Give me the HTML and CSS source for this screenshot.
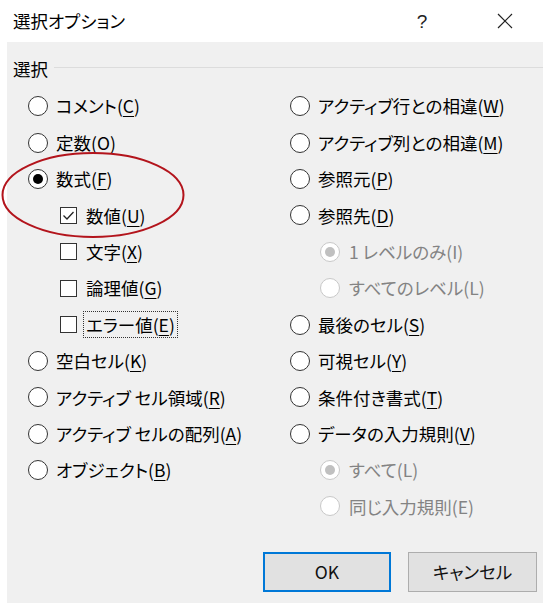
FILE: index.html
```html
<!DOCTYPE html>
<html lang="ja">
<head>
<meta charset="utf-8">
<link rel="stylesheet" href="styles.css">
</head>
<body>
<div class="dialog">
  <div class="titlebar">
    <div class="title">選択オプション</div>
    <div class="help">?</div>
    <div class="close">
      <svg width="16" height="16" viewBox="0 0 16 16"><path d="M1 1 L15 15 M15 1 L1 15" stroke="#222" stroke-width="1.2" fill="none"/></svg>
    </div>
  </div>
  <div class="body">
    <div class="group-head">
      <span class="group-label">選択</span>
      <span class="group-line"></span>
    </div>
    <div class="columns">
      <div class="col col-left">
        <div class="row"><span class="radio"></span><span class="lbl">コメント(<u>C</u>)</span></div>
        <div class="row"><span class="radio"></span><span class="lbl">定数(<u>O</u>)</span></div>
        <div class="row"><span class="radio checked"></span><span class="lbl">数式(<u>F</u>)</span></div>
        <div class="row sub"><span class="check"><svg width="17" height="17" viewBox="0 0 17 17"><path d="M3.5 8.5 L7 12 L13.5 5" stroke="#222" stroke-width="1.3" fill="none"/></svg></span><span class="lbl">数値(<u>U</u>)</span></div>
        <div class="row sub"><span class="check"></span><span class="lbl">文字(<u>X</u>)</span></div>
        <div class="row sub"><span class="check"></span><span class="lbl">論理値(<u>G</u>)</span></div>
        <div class="row sub"><span class="check"></span><span class="lbl focus">エラー値(<u>E</u>)</span></div>
        <div class="row"><span class="radio"></span><span class="lbl">空白セル(<u>K</u>)</span></div>
        <div class="row"><span class="radio"></span><span class="lbl">アクティブ セル領域(<u>R</u>)</span></div>
        <div class="row"><span class="radio"></span><span class="lbl">アクティブ セルの配列(<u>A</u>)</span></div>
        <div class="row"><span class="radio"></span><span class="lbl">オブジェクト(<u>B</u>)</span></div>
      </div>
      <div class="col col-right">
        <div class="row"><span class="radio"></span><span class="lbl">アクティブ行との相違(<u>W</u>)</span></div>
        <div class="row"><span class="radio"></span><span class="lbl">アクティブ列との相違(<u>M</u>)</span></div>
        <div class="row"><span class="radio"></span><span class="lbl">参照元(<u>P</u>)</span></div>
        <div class="row"><span class="radio"></span><span class="lbl">参照先(<u>D</u>)</span></div>
        <div class="row sub disabled"><span class="radio checked"></span><span class="lbl">1 レベルのみ(I)</span></div>
        <div class="row sub disabled"><span class="radio"></span><span class="lbl">すべてのレベル(L)</span></div>
        <div class="row"><span class="radio"></span><span class="lbl">最後のセル(<u>S</u>)</span></div>
        <div class="row"><span class="radio"></span><span class="lbl">可視セル(<u>Y</u>)</span></div>
        <div class="row"><span class="radio"></span><span class="lbl">条件付き書式(<u>T</u>)</span></div>
        <div class="row"><span class="radio"></span><span class="lbl">データの入力規則(<u>V</u>)</span></div>
        <div class="row sub disabled"><span class="radio checked"></span><span class="lbl">すべて(L)</span></div>
        <div class="row sub disabled"><span class="radio"></span><span class="lbl">同じ入力規則(E)</span></div>
      </div>
    </div>
    <div class="buttons">
      <button class="btn default">OK</button>
      <button class="btn">キャンセル</button>
    </div>
    <svg class="annot" width="190" height="92" viewBox="0 0 190 92"><ellipse cx="93" cy="45" rx="90.5" ry="42" stroke="#b3141c" stroke-width="2" fill="none"/></svg>
  </div>
</div>
</body>
</html>
```

FILE: styles.css
```css
* { box-sizing: border-box; }
html, body { margin: 0; padding: 0; background: #fff; }
body {
  width: 543px;
  height: 603px;
  overflow: hidden;
  font-family: "Noto Sans CJK JP", "Noto Sans", sans-serif;
  font-feature-settings: "palt";
  color: #000;
}
.dialog { width: 543px; height: 603px; display: flex; flex-direction: column; }
.titlebar {
  height: 42px;
  display: flex;
  align-items: center;
  background: #fff;
}
.title { font-size: 17.5px; padding-left: 13px; flex: 1; line-height: 1; }
.help { width: 20px; text-align: center; font-size: 19px; font-family: "Liberation Sans", sans-serif; color: #222; margin-right: 65px; line-height: 1; }
.close { width: 16px; height: 16px; margin-right: 30px; }
.close svg { display: block; }
.body {
  position: relative;
  flex: 1;
  margin-left: 7px;
  background: #f0f0f0;
  display: flex;
  flex-direction: column;
}
.group-head {
  height: 46px;
  display: flex;
  align-items: center;
  padding-left: 6px;
  padding-top: 8px;
}
.group-label { font-size: 17.5px; line-height: 1; }
.group-line { flex: 1; height: 1px; background: #dcdcdc; margin-left: 6px; margin-top: -4px; }
.columns { display: flex; }
.col { display: grid; grid-auto-rows: 36.4px; }
.col-left { width: 262px; padding-left: 21px; }
.col-right { flex: 1; padding-left: 21px; }
.row { display: flex; align-items: center; font-size: 17.5px; line-height: 1; }
.col-left .row.sub { padding-left: 32px; }
.col-right .row.sub { padding-left: 30px; }
.radio {
  width: 20px; height: 20px;
  border: 1.5px solid #333;
  border-radius: 50%;
  background: #fff;
  display: flex; align-items: center; justify-content: center;
  flex: none;
}
.radio.checked::after {
  content: ""; width: 10px; height: 10px; border-radius: 50%; background: #000;
}
.check {
  width: 17px; height: 17px;
  min-width: 17px;
  border: 1.2px solid #333;
  background: #fff;
  flex: none;
  position: relative;
}
.check svg { position: absolute; left: -1px; top: -1px; }
.lbl { margin-left: 6px; white-space: nowrap; padding: 4px 2px; }
.sub .lbl { margin-left: 7px; }
.lbl u { text-decoration-thickness: 1px; text-underline-offset: 3px; }
.lbl.focus { border: 1px dotted #333; margin-left: 6px; }
.disabled .lbl { color: #838383; }
.disabled .radio { border-color: #c8c8c8; }
.disabled .radio.checked::after { background: #c0c0c0; }
.buttons {
  display: flex;
  justify-content: flex-end;
  gap: 17px;
  padding-right: 6px;
  margin-top: 27px;
}
.btn {
  width: 129px; height: 40px;
  background: #e1e1e1;
  border: 1.5px solid #adadad;
  font-family: "Noto Sans CJK JP", "Noto Sans", sans-serif;
  font-feature-settings: "palt";
  font-size: 17.5px;
  color: #111;
  padding: 0;
}
.btn.default { border: 2px solid #0078d7; width: 128px; }
.annot { position: absolute; left: -7px; top: 108px; }
```
